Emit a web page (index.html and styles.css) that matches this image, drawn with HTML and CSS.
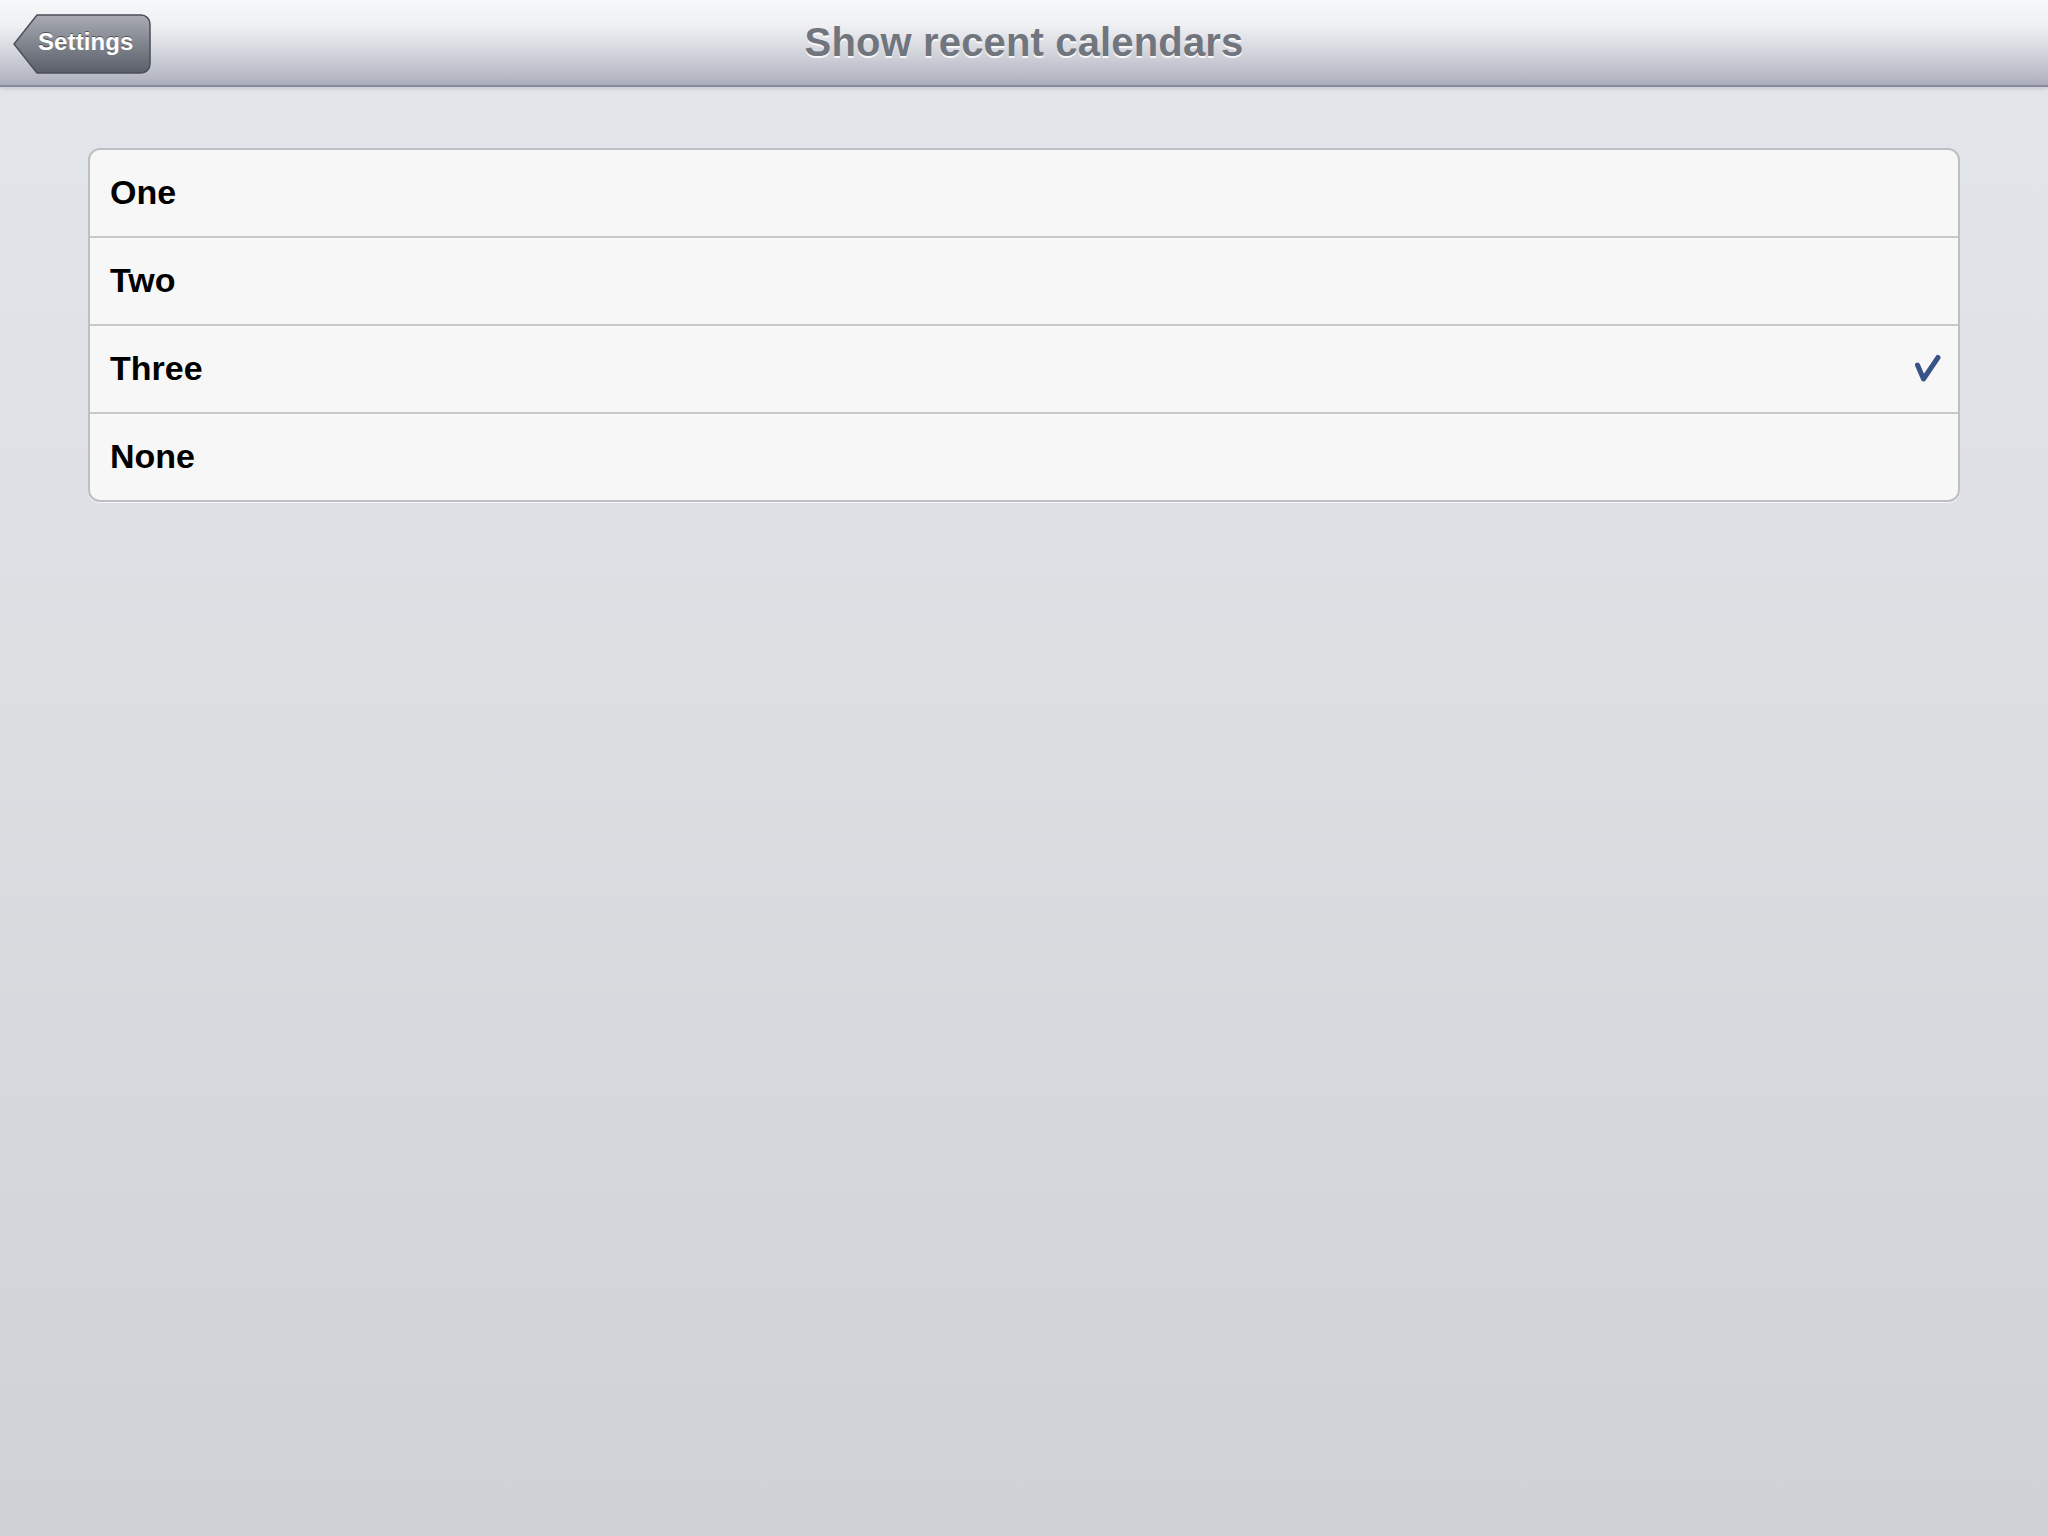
FILE: index.html
```html
<!DOCTYPE html>
<html>
<head>
<meta charset="utf-8">
<link rel="stylesheet" href="styles.css">
</head>
<body>
<div class="screen">
  <header class="navbar">
    <div class="back">
      <svg class="back-shape" width="138" height="60" viewBox="0 0 138 60">
        <defs>
          <linearGradient id="bg" x1="0" y1="0" x2="0" y2="1">
            <stop offset="0" stop-color="#a9acb4"/>
            <stop offset="0.5" stop-color="#80848d"/>
            <stop offset="1" stop-color="#5a5f69"/>
          </linearGradient>
        </defs>
        <path d="M24 1 H128 A9 9 0 0 1 137 10 V50 A9 9 0 0 1 128 59 H24 L1 30 Z" fill="url(#bg)" stroke="#4b4f58" stroke-width="1.5"/>
      </svg>
      <span class="back-label">Settings</span>
    </div>
    <h1 class="title">Show recent calendars</h1>
  </header>
  <main class="content">
    <ul class="group">
      <li class="row"><span class="label">One</span></li>
      <li class="row"><span class="label">Two</span></li>
      <li class="row"><span class="label">Three</span>
        <svg class="check" width="28" height="30" viewBox="0 0 28 30">
          <path d="M3.5 11 L9.5 25 L24 3.5" fill="none" stroke="#385487" stroke-width="5" stroke-linecap="round" stroke-linejoin="round"/>
        </svg>
      </li>
      <li class="row"><span class="label">None</span></li>
    </ul>
  </main>
</div>
</body>
</html>
```

FILE: styles.css
```css
html, body {
  margin: 0;
  padding: 0;
}
body {
  width: 2048px;
  height: 1536px;
  overflow: hidden;
  font-family: "Liberation Sans", Arial, sans-serif;
}
.screen {
  width: 2048px;
  height: 1536px;
  display: flex;
  flex-direction: column;
  background: linear-gradient(to bottom, #e3e6eb 0%, #dcdee2 45%, #d0d1d6 100%);
}
.navbar {
  position: relative;
  height: 85px;
  flex: 0 0 auto;
  display: flex;
  align-items: center;
  justify-content: center;
  background: linear-gradient(to bottom, #f7f8fa 0%, #eff0f3 30%, #d5d7de 60%, #acaebb 100%);
  border-bottom: 2px solid #878a9a;
  box-shadow: 0 2px 4px rgba(0, 0, 0, 0.12);
}
.back {
  position: absolute;
  left: 13px;
  top: 14px;
  width: 138px;
  height: 60px;
  display: flex;
  align-items: center;
}
.back-shape {
  position: absolute;
  left: 0;
  top: 0;
}
.back-label {
  position: relative;
  margin-left: 25px;
  margin-bottom: 4px;
  font-size: 24px;
  font-weight: bold;
  color: #ffffff;
  text-shadow: 0 -1px 0 rgba(0, 0, 0, 0.45);
  letter-spacing: 0.1px;
}
.title {
  margin: 0;
  font-size: 40px;
  font-weight: bold;
  color: #71757e;
  text-shadow: 0 2px 0 rgba(255, 255, 255, 0.85);
  letter-spacing: 0.15px;
  padding-bottom: 1px;
}
.content {
  padding: 61px 88px 0 88px;
}
.group {
  list-style: none;
  margin: 0;
  padding: 0;
  background: #f7f7f7;
  border: 2px solid #bdbfc4;
  border-radius: 12px;
  box-shadow: 0 1px 0 rgba(255, 255, 255, 0.7);
  overflow: hidden;
}
.row {
  height: 86px;
  display: flex;
  align-items: center;
  justify-content: space-between;
  padding: 0 16px 2px 20px;
  box-sizing: border-box;
  border-top: 2px solid #c8c9cc;
}
.row:first-child {
  border-top: none;
  height: 86px;
}
.row + .row {
  height: 88px;
}
.label {
  font-size: 34px;
  font-weight: bold;
  color: #000000;
}
.check {
  display: block;
  margin-top: 2px;
}
```
